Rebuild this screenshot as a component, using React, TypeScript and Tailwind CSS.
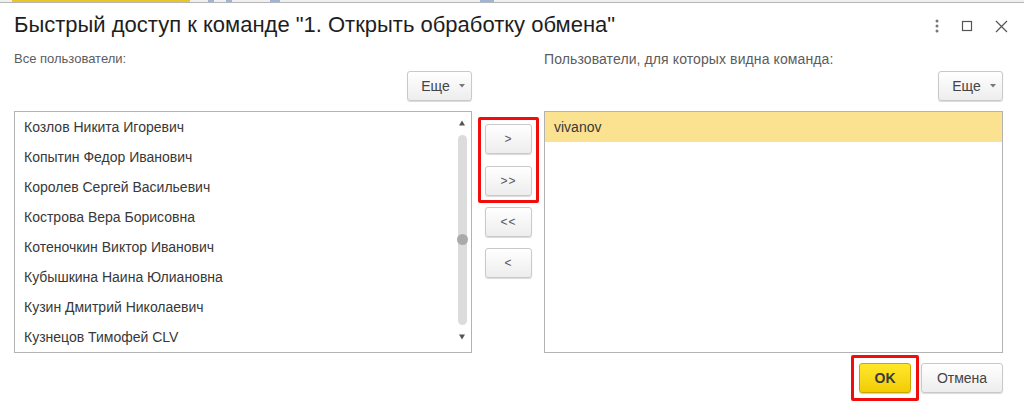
import React from 'react';

const allUsers = [
  'Козлов Никита Игоревич',
  'Копытин Федор Иванович',
  'Королев Сергей Васильевич',
  'Кострова Вера Борисовна',
  'Котеночкин Виктор Иванович',
  'Кубышкина Наина Юлиановна',
  'Кузин Дмитрий Николаевич',
  'Кузнецов Тимофей CLV',
];

const btn =
  'flex items-center justify-center rounded-[3px] border border-[#c9c9c9] bg-gradient-to-b from-white to-[#ededed] shadow-[0_1px_1px_rgba(0,0,0,0.15)]';

const MoreButton: React.FC = () => (
  <button type="button" className={`${btn} h-[30px] w-[65px] pl-[7px] gap-[9px] text-[14px] text-[#444]`}>
    <span>Еще</span>
    <svg width="6" height="4" viewBox="0 0 6 4">
      <path d="M0 0h6L3 3.5z" fill="#777" />
    </svg>
  </button>
);

const MoveButton: React.FC<{ label: string }> = ({ label }) => (
  <button type="button" className={`${btn} h-[30px] w-[47px] text-[12px] text-[#555] tracking-[1px]`}>
    {label}
  </button>
);

const App: React.FC = () => {
  return (
    <div className="w-[1024px] h-[405px] bg-white overflow-hidden font-['Liberation_Sans',Arial,sans-serif]">
      {/* strip of the window behind */}
      <div className="h-[3px] flex border-b border-[#b5b5b5] bg-[#f0f0f0]">
        <div className="ml-[12px] w-[178px] bg-[#e6c628]" />
        <div className="ml-[18px] w-[6px] bg-[#9cb7d6]" />
        <div className="ml-[12px] w-[6px] bg-[#9cb7d6]" />
        <div className="ml-[38px] w-[10px] bg-[#9cb7d6]" />
        <div className="ml-[200px] w-[14px] bg-[#9cb7d6]" />
      </div>

      {/* header */}
      <div className="h-[44px] flex items-center pl-[14px] pr-[14px]">
        <h1 className="flex-1 text-[22px] text-[#1e1e1e] leading-none">
          Быстрый доступ к команде "1. Открыть обработку обмена"
        </h1>
        <div className="flex items-center gap-[22px] pr-[2px] mt-[2px]">
          <svg width="4" height="14" viewBox="0 0 4 14">
            <circle cx="2" cy="2" r="1.5" fill="#777" />
            <circle cx="2" cy="7" r="1.5" fill="#777" />
            <circle cx="2" cy="12" r="1.5" fill="#777" />
          </svg>
          <svg width="12" height="12" viewBox="0 0 12 12">
            <rect x="1.5" y="1.5" width="9" height="9" fill="none" stroke="#555" strokeWidth="1.2" />
          </svg>
          <svg width="13" height="13" viewBox="0 0 13 13">
            <path d="M1 1l11 11M12 1L1 12" stroke="#555" strokeWidth="1.2" />
          </svg>
        </div>
      </div>

      {/* body */}
      <div className="flex pl-[14px]">
        {/* left */}
        <div className="w-[458px] flex flex-col">
          <div className="h-[24px] flex items-center text-[13px] text-[#5c5c5c]">Все пользователи:</div>
          <div className="flex justify-end">
            <MoreButton />
          </div>
          <div className="mt-[10px] h-[242px] border border-[#b3b3b3] flex">
            <div className="flex-1 flex flex-col">
              {allUsers.map((u) => (
                <div key={u} className="h-[30px] flex items-center pl-[9px] text-[14px] text-[#383838]">
                  {u}
                </div>
              ))}
            </div>
            <div className="w-[10px] mr-[4px] flex flex-col items-center pt-[8px]">
              <svg width="6" height="6" viewBox="0 0 6 6">
                <path d="M3 0.5L6 5.5H0z" fill="#555" />
              </svg>
              <div className="mt-[9px] w-[9px] h-[190px] rounded-full bg-[#dcdcdc] flex flex-col items-center">
                <div className="mt-[99px] w-[11px] h-[11px] rounded-full bg-[#aaaaaa]" />
              </div>
              <svg className="mt-[9px]" width="6" height="6" viewBox="0 0 6 6">
                <path d="M0 0.5h6L3 5.5z" fill="#555" />
              </svg>
            </div>
          </div>
        </div>

        {/* middle */}
        <div className="w-[72px] flex flex-col items-start pl-[6px] pt-[70px]">
          <div className="flex flex-col gap-[12px] border-[3px] border-[#f20d0d] rounded-[2px] p-[4px]">
            <MoveButton label=">" />
            <MoveButton label=">>" />
          </div>
          <div className="flex flex-col gap-[11px] mt-[4px] ml-[7px]">
            <MoveButton label="<<" />
            <MoveButton label="<" />
          </div>
        </div>

        {/* right */}
        <div className="w-[459px] flex flex-col">
          <div className="h-[24px] flex items-center text-[14px] tracking-[0.1px] text-[#5c5c5c]">
            Пользователи, для которых видна команда:
          </div>
          <div className="flex justify-end">
            <MoreButton />
          </div>
          <div className="mt-[10px] h-[242px] border border-[#b3b3b3]">
            <div className="h-[30px] flex items-center pl-[9px] bg-[#fbe291] text-[14px] text-[#383838]">vivanov</div>
          </div>
          <div className="mt-[2px] flex justify-end items-start">
            <div className="border-[3px] border-[#f20d0d] rounded-[2px] p-[5px]">
              <button
                type="button"
                className="h-[30px] w-[52px] rounded-[3px] border border-[#c7a600] bg-gradient-to-b from-[#ffe829] to-[#f2cc00] shadow-[0_1px_1px_rgba(0,0,0,0.2)] text-[14px] font-bold text-[#3a3a3a] flex items-center justify-center"
              >
                OK
              </button>
            </div>
            <button type="button" className={`${btn} ml-[2px] mt-[8px] h-[30px] w-[82px] text-[14px] text-[#444]`}>
              Отмена
            </button>
          </div>
        </div>
      </div>
    </div>
  );
};

export default App;
